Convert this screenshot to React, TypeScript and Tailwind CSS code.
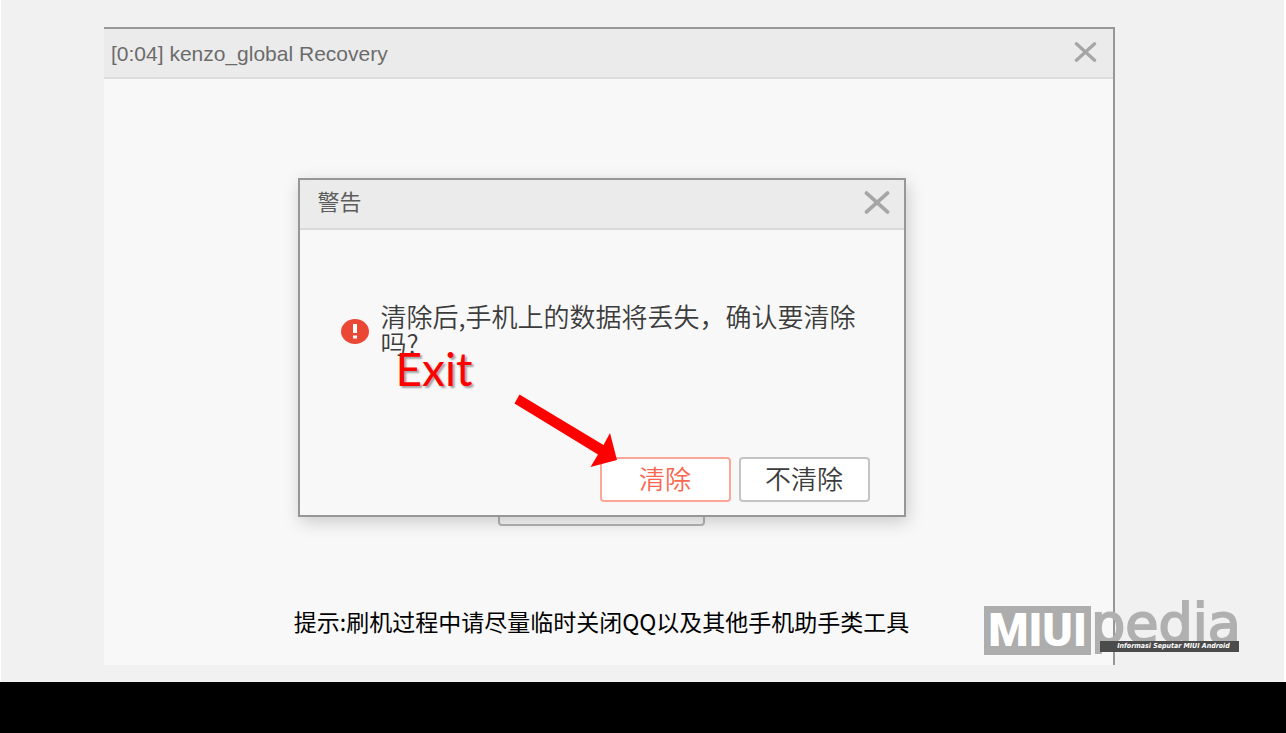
import { useState } from "react";

const cjk = "font-['Noto_Sans_CJK_SC',sans-serif]";

function CloseIcon({ className }: { className: string }) {
  return (
    <svg viewBox="0 0 24 22" className={className} aria-hidden="true">
      <path
        d="M2 2 L22 20 M22 2 L2 20"
        stroke="#a6a6a6"
        strokeWidth="3.6"
        strokeLinecap="round"
        fill="none"
      />
    </svg>
  );
}

function WarningDialog({ onClose }: { onClose: () => void }) {
  return (
    <section
      role="dialog"
      aria-labelledby="warning-title"
      className="relative w-[608px] border-2 border-[#979797] bg-[#f8f8f8] shadow-[2px_5px_16px_rgba(0,0,0,0.18)]"
    >
      <header className="flex h-[50px] items-center justify-between border-b-2 border-[#d9d9d9] bg-[#ebebeb] pr-[14px] pb-1 pl-[18px]">
        <h2 id="warning-title" className="pb-1 text-[22px] leading-8 text-[#5c5c5c]">
          警告
        </h2>
        <button type="button" aria-label="关闭" onClick={onClose}>
          <CloseIcon className="h-[23px] w-[26px]" />
        </button>
      </header>

      <div className="flex h-[227px] items-start gap-3 pt-[72px] pr-7 pl-[41px]">
        <svg viewBox="0 0 28 25" className="mt-[17px] h-[25px] w-7 shrink-0" aria-hidden="true">
          <ellipse cx="14" cy="12.5" rx="14" ry="12.5" fill="#ea4735" />
          <path d="M12 5h4v9h-4zM12 16.5h4v3h-4z" fill="#fff" />
        </svg>
        <p className="text-[26px] leading-[27px] font-[350] text-[#3c3c3c]">
          清除后,手机上的数据将丢失，确认要清除吗?
        </p>
      </div>

      <footer className="flex justify-end gap-2 pr-[34px] pb-[13px]">
        <button
          type="button"
          className="h-[45px] w-[131px] rounded border-2 border-[#fba699] bg-white pb-1 text-[26px] leading-8 font-[350] text-[#fa6750]"
        >
          清除
        </button>
        <button
          type="button"
          onClick={onClose}
          className="h-[45px] w-[131px] rounded border-2 border-[#c4c4c4] bg-white pb-1 text-[26px] leading-8 font-[350] text-[#3c3c3c]"
        >
          不清除
        </button>
      </footer>

      {/* Annotation */}
      <span className="absolute top-[164px] left-[96px] font-['Lato',sans-serif] text-[46px] leading-[50px] text-[#ff0000] [text-shadow:2px_2px_2px_rgba(0,0,0,0.35)]">
        Exit
      </span>
      <svg viewBox="0 0 104 74" className="absolute top-[214px] left-[214px] h-[74px] w-[104px]" aria-hidden="true">
        <path d="M5.500 0.500 L89.500 51 L96 39 L103 66 L76.500 73 L84 60.500 L0.500 9.500 Z" fill="#ff0000" />
      </svg>
    </section>
  );
}

function Logo() {
  return (
    <div className="absolute right-[44px] bottom-[78px] flex items-end">
      <div className="flex h-[49px] w-[107px] items-center justify-center bg-[#adadad] font-['Roboto',sans-serif] text-[46px] leading-[49px] font-black text-white">
        MIUI
      </div>
      <div className="relative h-[60px] w-[151px]">
        <span className="absolute bottom-px left-0 font-['DejaVu_Sans',sans-serif] text-[54px] leading-[60px] text-[#b0b0b0] [-webkit-text-stroke:2px_#b0b0b0]">
          pedia
        </span>
        <span className="absolute bottom-[3px] left-[9px] h-[11px] w-[139px] bg-[#4b4b4b] pl-2 text-center font-['DejaVu_Sans_Condensed','DejaVu_Sans',sans-serif] text-[7px] leading-[11px] font-bold whitespace-nowrap text-white italic">
          Informasi Seputar MIUI Android
        </span>
      </div>
    </div>
  );
}

export default function App() {
  const [open, setOpen] = useState(true);

  return (
    <div className={`relative flex min-h-screen flex-col ${cjk}`}>
      <div className="flex-1 border-r-2 border-l border-white bg-[#f1f1f1] pt-[27px] pr-[169px] pl-[103px]">
        <main className="border-t-2 border-r-2 border-[#979797] bg-[#f8f8f8]">
          <header className="flex h-[50px] items-center justify-between border-b-2 border-[#dcdcdc] bg-[#ebebeb] pr-4 pb-[3px] pl-[7px]">
            <h1 className="pt-1 font-['Liberation_Sans',sans-serif] text-[21px] leading-6 text-[#6b6b6b]">
              [0:04] kenzo_global Recovery
            </h1>
            <button type="button" aria-label="关闭" onClick={() => setOpen(false)}>
              <CloseIcon className="h-[20px] w-[23px]" />
            </button>
          </header>

          <div className="relative flex flex-col items-center pt-[401px] pr-[14px] pb-7">
            <button
              type="button"
              aria-label="清除数据"
              className="h-[46px] w-[207px] rounded border-2 border-[#b5b5b5] bg-[#f8f8f8]"
            />
            <p className="mt-[79px] text-[23px] leading-8 text-black">
              提示:刷机过程中请尽量临时关闭QQ以及其他手机助手类工具
            </p>
            {open && (
              <div className="absolute inset-x-0 top-[99px] flex justify-center pr-[14px]">
                <WarningDialog onClose={() => setOpen(false)} />
              </div>
            )}
          </div>
        </main>
      </div>

      <div className="h-[51px] bg-black" />
      <Logo />
    </div>
  );
}
